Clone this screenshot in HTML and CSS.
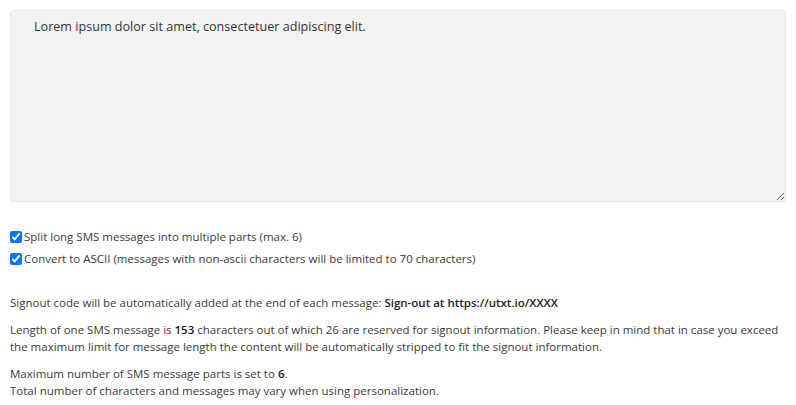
FILE: index.html
```html
<!DOCTYPE html>
<html lang="en">
<head>
    <meta charset="UTF-8">
    <title>SMS message</title>
    <link rel="stylesheet" href="styles.css">
</head>
<body>
    <div class="sms-form">
        <textarea class="message-input" rows="10">Lorem ipsum dolor sit amet, consectetuer adipiscing elit.</textarea>

        <div class="options">
            <label class="option"><input type="checkbox" checked> Split long SMS messages into multiple parts (max. 6)</label>
            <label class="option"><input type="checkbox" checked> Convert to ASCII (messages with non-ascii characters will be limited to 70 characters)</label>
        </div>

        <div class="info">
            <p>Signout code will be automatically added at the end of each message: <strong>Sign-out at https://utxt.io/XXXX</strong></p>
            <p>Length of one SMS message is <strong>153</strong> characters out of which 26 are reserved for signout information. Please keep in mind that in case you exceed the maximum limit for message length the content will be automatically stripped to fit the signout information.</p>
            <p>Maximum number of SMS message parts is set to <strong>6</strong>.<br>Total number of characters and messages may vary when using personalization.</p>
        </div>
    </div>
</body>
</html>
```

FILE: styles.css
```css
* {
    box-sizing: border-box;
}

body {
    margin: 0;
    padding: 10px;
    font-family: 'Open Sans', sans-serif;
    font-size: 11.5px;
    color: #3a3a3a;
    background: #fff;
}

.message-input {
    display: block;
    width: 100%;
    height: 192px;
    padding: 7px 23px;
    font-family: 'Open Sans', sans-serif;
    font-size: 12.6px;
    color: #333;
    background: #f3f3f3;
    border: 1px solid #e6e6e6;
    border-radius: 3px;
    resize: vertical;
}

.options {
    display: flex;
    flex-direction: column;
    gap: 7px;
    margin-top: 27px;
}

.option {
    display: flex;
    align-items: center;
    gap: 2px;
}

.option input {
    margin: 0;
    width: 12px;
    height: 12px;
}

.info {
    margin-top: 28px;
}

.info p {
    margin: 0 0 10px;
    line-height: 17px;
}

.info strong {
    font-weight: 600;
    color: #222;
}
```
